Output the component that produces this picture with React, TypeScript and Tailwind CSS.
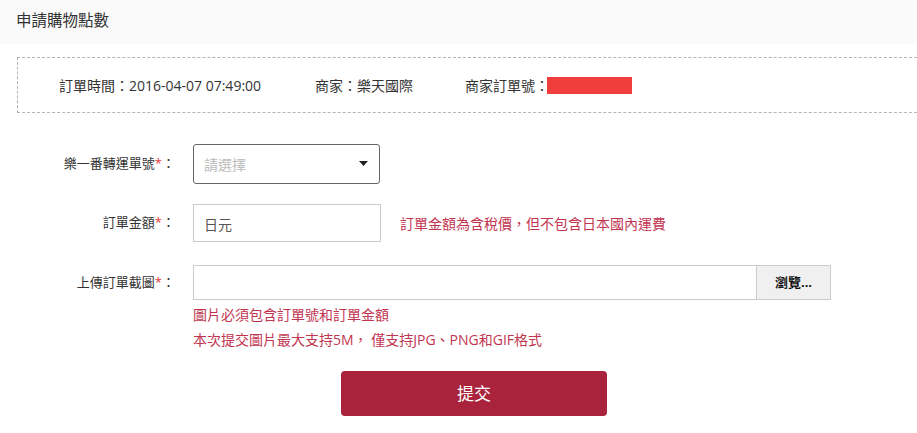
import React from "react";

const Label = ({ text }: { text: string }) => (
  <div className="w-[176px] shrink-0 text-right text-[13px] text-[#333] pr-[1px]">
    {text}
    <span className="text-[#e4393c]">*</span>：
  </div>
);

const App = () => {
  return (
    <main className="w-[917px] h-[433px] overflow-hidden bg-white text-[#333] font-['Open_Sans','Noto_Sans_CJK_TC',sans-serif]">
      {/* Header */}
      <div className="h-[44px] bg-[#fafafa] pl-[16px] flex items-center">
        <h1 className="text-[15.5px] text-[#333] -mt-[2px]">申請購物點數</h1>
      </div>

      {/* Order info */}
      <div className="ml-[17px] mt-[13px] w-[920px] h-[56px] border border-dashed border-[#b5b5b5] flex items-center text-[14px] text-[#333] pl-[41px]">
        <span className="w-[256px]">訂單時間：2016-04-07 07:49:00</span>
        <span className="w-[150px]">商家：樂天國際</span>
        <span className="flex items-center">
          商家訂單號：
          <span className="inline-block w-[85px] h-[17px] bg-[#ef3e3c] -ml-[2px]" />
        </span>
      </div>

      {/* Form */}
      <div className="mt-[30px] flex flex-col">
        <div className="flex items-center h-[41px]">
          <Label text="樂一番轉運單號" />
          <div className="ml-[17px] w-[187px] h-[40px] border border-[#666] rounded-[3px] flex items-center justify-between pl-[10px] pr-[11px]">
            <span className="text-[14px] text-[#bbb] mt-[2px]">請選擇</span>
            <svg width="9" height="5" viewBox="0 0 9 5">
              <path d="M0 0h9L4.5 5z" fill="#222" />
            </svg>
          </div>
        </div>

        <div className="flex items-center h-[38px] mt-[20px]">
          <Label text="訂單金額" />
          <div className="ml-[17px] w-[188px] h-[38px] border border-[#ccc] flex items-center pl-[10px]">
            <span className="text-[14px] text-[#555] mt-[2px]">日元</span>
          </div>
          <span className="ml-[19px] text-[14px] text-[#c23551]">
            訂單金額為含稅價，但不包含日本國內運費
          </span>
        </div>

        <div className="flex items-center h-[35px] mt-[23px]">
          <Label text="上傳訂單截圖" />
          <div className="ml-[17px] w-[638px] h-[35px] border border-[#ccc] flex">
            <div className="flex-1" />
            <div className="w-[74px] border-l border-[#ccc] bg-[#f0f0f0] flex items-center justify-center text-[13px] text-[#111] font-bold">
              瀏覽...
            </div>
          </div>
        </div>

        <div className="ml-[193px] mt-[2px] text-[14px] text-[#c23551] leading-[25px]">
          <div>圖片必須包含訂單號和訂單金額</div>
          <div>本次提交圖片最大支持5M， 僅支持JPG、PNG和GIF格式</div>
        </div>

        <button className="ml-[341px] mt-[19px] w-[266px] h-[45px] bg-[#a8233b] rounded-[4px] text-white text-[17px]">
          提交
        </button>
      </div>
    </main>
  );
};

export default App;
